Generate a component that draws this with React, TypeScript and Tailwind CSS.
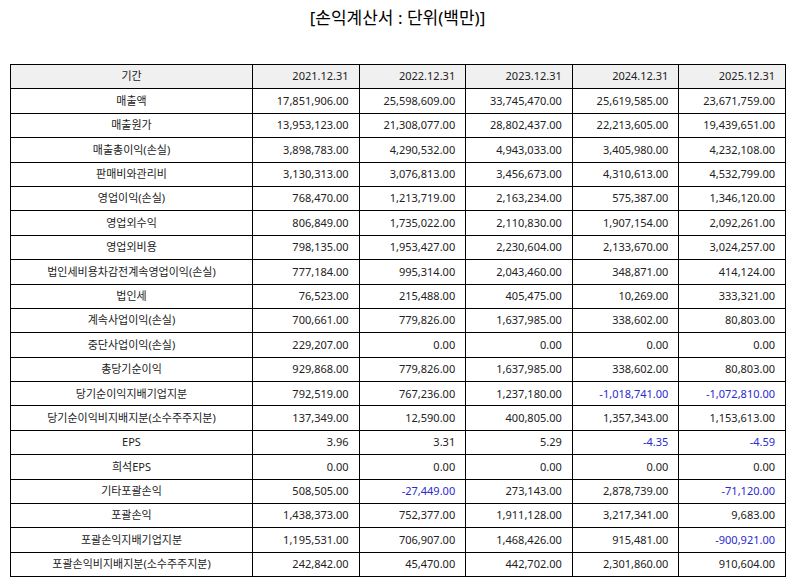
const years = ["2021.12.31", "2022.12.31", "2023.12.31", "2024.12.31", "2025.12.31"];

const rows: [string, string[]][] = [
  ["매출액", ["17,851,906.00", "25,598,609.00", "33,745,470.00", "25,619,585.00", "23,671,759.00"]],
  ["매출원가", ["13,953,123.00", "21,308,077.00", "28,802,437.00", "22,213,605.00", "19,439,651.00"]],
  ["매출총이익(손실)", ["3,898,783.00", "4,290,532.00", "4,943,033.00", "3,405,980.00", "4,232,108.00"]],
  ["판매비와관리비", ["3,130,313.00", "3,076,813.00", "3,456,673.00", "4,310,613.00", "4,532,799.00"]],
  ["영업이익(손실)", ["768,470.00", "1,213,719.00", "2,163,234.00", "575,387.00", "1,346,120.00"]],
  ["영업외수익", ["806,849.00", "1,735,022.00", "2,110,830.00", "1,907,154.00", "2,092,261.00"]],
  ["영업외비용", ["798,135.00", "1,953,427.00", "2,230,604.00", "2,133,670.00", "3,024,257.00"]],
  ["법인세비용차감전계속영업이익(손실)", ["777,184.00", "995,314.00", "2,043,460.00", "348,871.00", "414,124.00"]],
  ["법인세", ["76,523.00", "215,488.00", "405,475.00", "10,269.00", "333,321.00"]],
  ["계속사업이익(손실)", ["700,661.00", "779,826.00", "1,637,985.00", "338,602.00", "80,803.00"]],
  ["중단사업이익(손실)", ["229,207.00", "0.00", "0.00", "0.00", "0.00"]],
  ["총당기순이익", ["929,868.00", "779,826.00", "1,637,985.00", "338,602.00", "80,803.00"]],
  ["당기순이익지배기업지분", ["792,519.00", "767,236.00", "1,237,180.00", "-1,018,741.00", "-1,072,810.00"]],
  ["당기순이익비지배지분(소수주주지분)", ["137,349.00", "12,590.00", "400,805.00", "1,357,343.00", "1,153,613.00"]],
  ["EPS", ["3.96", "3.31", "5.29", "-4.35", "-4.59"]],
  ["희석EPS", ["0.00", "0.00", "0.00", "0.00", "0.00"]],
  ["기타포괄손익", ["508,505.00", "-27,449.00", "273,143.00", "2,878,739.00", "-71,120.00"]],
  ["포괄손익", ["1,438,373.00", "752,377.00", "1,911,128.00", "3,217,341.00", "9,683.00"]],
  ["포괄손익지배기업지분", ["1,195,531.00", "706,907.00", "1,468,426.00", "915,481.00", "-900,921.00"]],
  ["포괄손익비지배지분(소수주주지분)", ["242,842.00", "45,470.00", "442,702.00", "2,301,860.00", "910,604.00"]]
];

export default function App() {
  return (
    <div
      className="w-[795px] h-[586px] bg-white text-[#222]"
      style={{ fontFamily: '"Noto Sans", "Noto Sans CJK KR", sans-serif' }}
    >
      <h1 className="pt-[6px] h-[64px] text-center text-[17px] leading-[24px] text-black">
        [손익계산서 : 단위(백만)]
      </h1>
      <table className="ml-[10px] w-[776px] border-collapse table-fixed text-[11px]">
        <colgroup>
          <col className="w-[242px]" />
          <col />
          <col />
          <col />
          <col />
          <col />
        </colgroup>
        <thead>
          <tr className="h-[24.4px] bg-[#f0f0f0]">
            <th className="border border-black font-normal text-center">기간</th>
            {years.map(y => (
              <th key={y} className="border border-black font-normal text-right pr-[10px]">
                {y}
              </th>
            ))}
          </tr>
        </thead>
        <tbody>
          {rows.map(([label, vals]) => (
            <tr key={label} className="h-[24.4px]">
              <td className="border border-black text-center">{label}</td>
              {vals.map((v, i) =>
                v.startsWith("-") ? (
                  <td key={i} className="border border-black text-right pr-[10px] text-[#2a2ad0]">
                    {v}
                  </td>
                ) : (
                  <td key={i} className="border border-black text-right pr-[10px]">
                    {v}
                  </td>
                )
              )}
            </tr>
          ))}
        </tbody>
      </table>
    </div>
  );
}
